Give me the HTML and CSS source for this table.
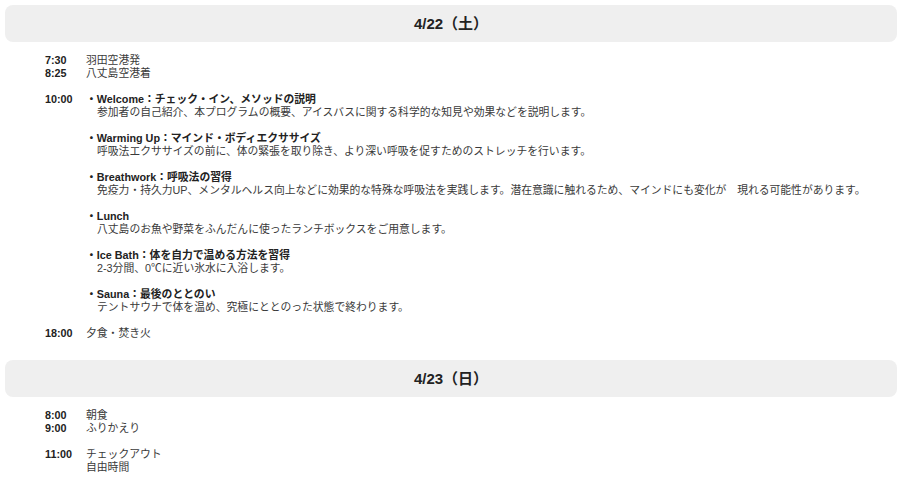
FILE: index.html
```html
<!DOCTYPE html>
<html lang="ja">
<head>
    <meta charset="UTF-8">
    <meta name="viewport" content="width=device-width, initial-scale=1.0">
    <title>スケジュール</title>
    <link rel="stylesheet" href="styles.css">
</head>
<body>
    <div class="page">
        <h2 class="day">4/22（土）</h2>
        <div class="schedule">
            <div class="slot">
                <div class="time">7:30<br>8:25</div>
                <div class="what">羽田空港発<br>八丈島空港着</div>
            </div>

            <div class="slot">
                <div class="time">10:00</div>
                <div class="what">
                    <div class="item">
                        <div class="item-title">・Welcome：チェック・イン、メソッドの説明</div>
                        <div class="item-desc">参加者の自己紹介、本プログラムの概要、アイスバスに関する科学的な知見や効果などを説明します。</div>
                    </div>
                    <div class="item">
                        <div class="item-title">・Warming Up：マインド・ボディエクササイズ</div>
                        <div class="item-desc">呼吸法エクササイズの前に、体の緊張を取り除き、より深い呼吸を促すためのストレッチを行います。</div>
                    </div>
                    <div class="item">
                        <div class="item-title">・Breathwork：呼吸法の習得</div>
                        <div class="item-desc">免疫力・持久力UP、メンタルヘルス向上などに効果的な特殊な呼吸法を実践します。潜在意識に触れるため、マインドにも変化が　現れる可能性があります。</div>
                    </div>
                    <div class="item">
                        <div class="item-title">・Lunch</div>
                        <div class="item-desc">八丈島のお魚や野菜をふんだんに使ったランチボックスをご用意します。</div>
                    </div>
                    <div class="item">
                        <div class="item-title">・Ice Bath：体を自力で温める方法を習得</div>
                        <div class="item-desc">2-3分間、0℃に近い氷水に入浴します。</div>
                    </div>
                    <div class="item">
                        <div class="item-title">・Sauna：最後のととのい</div>
                        <div class="item-desc">テントサウナで体を温め、究極にととのった状態で終わります。</div>
                    </div>
                </div>
            </div>

            <div class="slot">
                <div class="time">18:00</div>
                <div class="what">夕食・焚き火</div>
            </div>
        </div>

        <h2 class="day">4/23（日）</h2>
        <div class="schedule">
            <div class="slot">
                <div class="time">8:00<br>9:00</div>
                <div class="what">朝食<br>ふりかえり</div>
            </div>
            <div class="slot">
                <div class="time">11:00</div>
                <div class="what">チェックアウト<br>自由時間</div>
            </div>
        </div>
    </div>
</body>
</html>
```

FILE: styles.css
```css
body {
    margin: 0;
    font-family: "Liberation Sans", "Noto Sans CJK JP", sans-serif;
    font-size: 10.8px;
    line-height: 13px;
    color: #3a3a3a;
    background: #fff;
}

.page {
    padding: 5px 8px 0 5px;
}

.day {
    margin: 0;
    height: 37px;
    display: flex;
    justify-content: center;
    align-items: center;
    background-color: #efefef;
    border-radius: 8px;
    font-size: 15px;
    line-height: 18px;
    font-weight: bold;
    color: #222;
}

.schedule {
    padding-left: 40px;
    margin: 12px 0 20px;
    display: flex;
    flex-direction: column;
    gap: 13px;
}

.slot {
    display: grid;
    grid-template-columns: 41px 1fr;
}

.time {
    font-weight: bold;
    color: #222;
}

.what {
    display: flex;
    flex-direction: column;
    gap: 13px;
}

.item-title {
    font-weight: bold;
    color: #222;
}

.item-desc {
    padding-left: 11px;
}
```
